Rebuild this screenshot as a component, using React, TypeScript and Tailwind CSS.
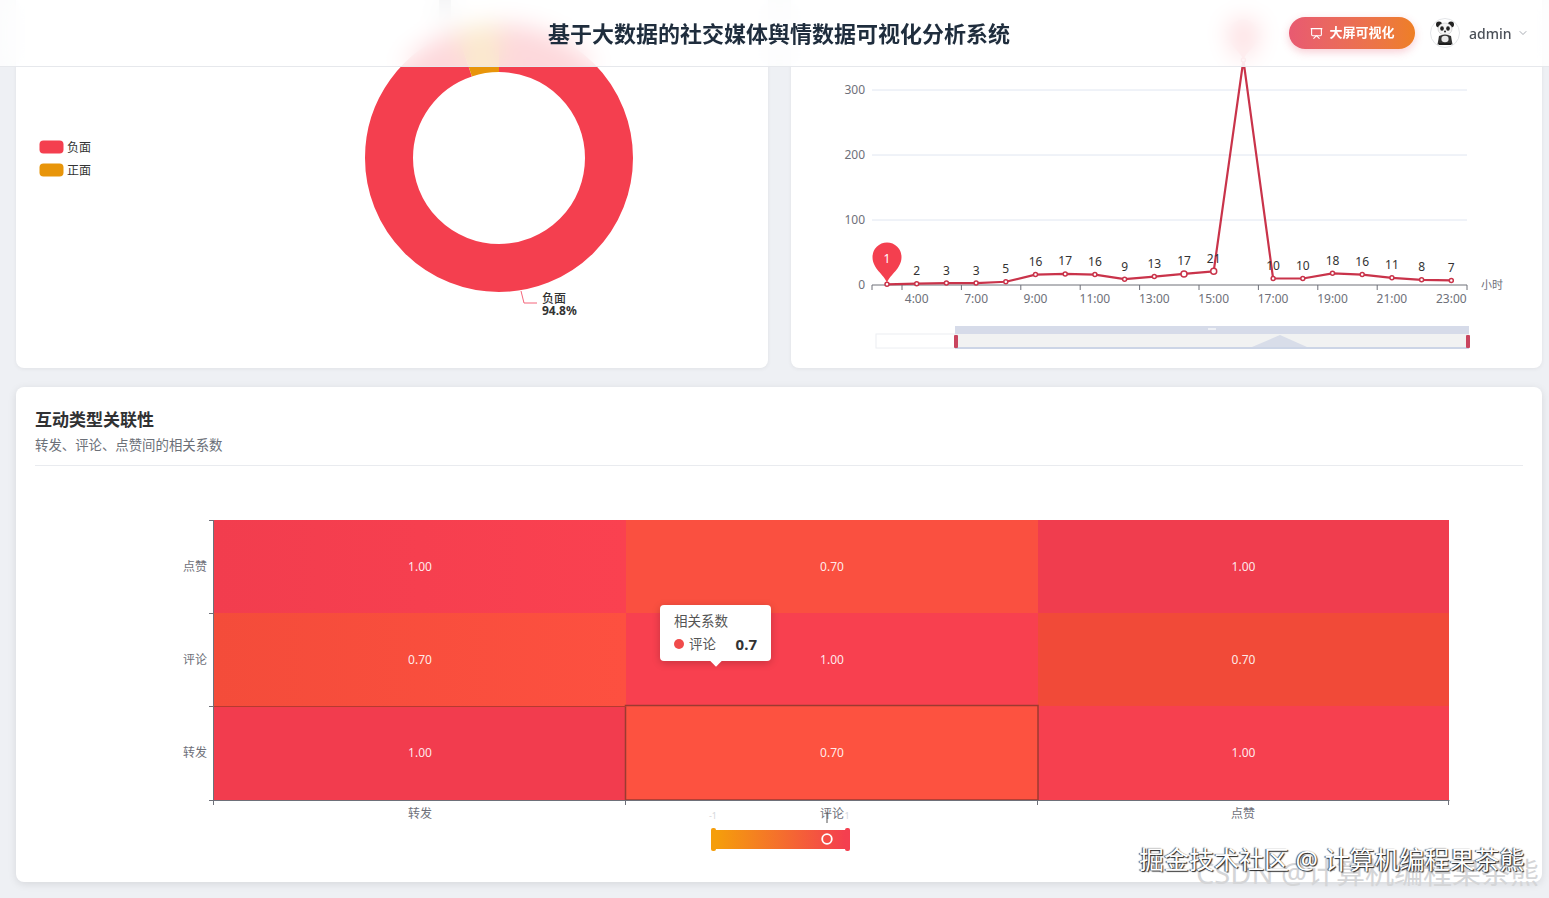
import { ChevronDown, Presentation } from "lucide-react";

const FONT = "font-['Noto_Sans','Noto_Sans_CJK_SC',sans-serif]";

const hours = [1, 2, 3, 3, 5, 16, 17, 16, 9, 13, 17, 21, 346, 10, 10, 18, 16, 11, 8, 7];
const axisLabels = ["4:00", "7:00", "9:00", "11:00", "13:00", "15:00", "17:00", "19:00", "21:00", "23:00"];

const px = (i: number) => 887 + i * 29.7;
const py = (v: number) => 285 - v * 0.65;

const PIN = "M887 283 C884 274 872.5 269 872.5 257 A14.5 14.5 0 0 1 901.5 257 C901.5 269 890 274 887 283 Z";

function Panda() {
  return (
    <svg viewBox="0 0 30 30" className="w-[30px] h-[30px]">
      <circle cx="15" cy="15" r="14.5" fill="#fff" stroke="#e3e5e8" />
      <circle cx="9" cy="6.5" r="3" fill="#222" />
      <circle cx="21" cy="6.5" r="3" fill="#222" />
      <ellipse cx="15" cy="11" rx="7" ry="6" fill="#f4f4f4" stroke="#bbb" strokeWidth="0.5" />
      <ellipse cx="12" cy="10.5" rx="1.8" ry="2.2" fill="#222" />
      <ellipse cx="18" cy="10.5" rx="1.8" ry="2.2" fill="#222" />
      <circle cx="15" cy="13.5" r="1" fill="#222" />
      <path d="M9 18 Q15 15 21 18 L22.5 26.5 H7.5 Z" fill="#333" />
      <ellipse cx="15" cy="21" rx="3.6" ry="3.2" fill="#e8e8e8" />
      <path d="M9 25 H21 V27 H9 Z" fill="#1c1c1c" />
    </svg>
  );
}

function DonutChart() {
  const r = 110;
  const circ = 2 * Math.PI * r;
  const neg = circ * 0.948;
  return (
    <svg width="752" height="388" viewBox="16 -20 752 388" className="block">
      <rect x="439" y="-20" width="12" height="40" fill="#b9bdc4" />
      <g transform="rotate(-90 499 158)" fill="none" strokeWidth="48">
        <circle cx="499" cy="158" r={r} stroke="#f43f4f" strokeDasharray={`${neg} ${circ}`} />
        <circle cx="499" cy="158" r={r} stroke="#e8950a" strokeDasharray={`${circ - neg} ${circ}`} strokeDashoffset={-neg} />
      </g>
      <path d="M521 291 L524 303 L537 303" fill="none" stroke="#f4657a" strokeWidth="1" />
      <text x="542" y="303" fontSize="12" fontWeight="500" fill="#333">负面</text>
      <text x="542" y="315" fontSize="12" fontWeight="700" fill="#333">94.8%</text>

      <rect x="39.5" y="140.5" width="24" height="13" rx="4" fill="#f43f4f" />
      <text x="67" y="152" fontSize="12" fill="#333">负面</text>
      <rect x="39.5" y="163.5" width="24" height="13" rx="4" fill="#e8950a" />
      <text x="67" y="175" fontSize="12" fill="#333">正面</text>
    </svg>
  );
}

function LineChart() {
  const line = hours.map((v, i) => `${px(i)},${py(v)}`).join(" ");
  return (
    <svg width="751" height="388" viewBox="791 -20 751 388" className="block">
      {[25, 90, 155, 220].map((y) => (
        <line key={y} x1="872" x2="1467" y1={y} y2={y} stroke="#e0e6f1" />
      ))}
      {[["300", 90], ["200", 155], ["100", 220], ["0", 285]].map(([t, y]) => (
        <text key={t} x="865" y={Number(y) + 4} textAnchor="end" fontSize="12" fill="#6e7079">{t}</text>
      ))}
      <line x1="872" x2="1467" y1="285" y2="285" stroke="#6e7079" />
      {Array.from({ length: 11 }).map((_, i) => {
        const x = i === 10 ? 1467 : 872 + (i === 0 ? 0 : 30 + (i - 1) * 59.4);
        return <line key={i} x1={x} x2={x} y1="285" y2="290" stroke="#6e7079" />;
      })}
      {axisLabels.map((t, i) => (
        <text key={t} x={px(1 + i * 2)} y="303" textAnchor="middle" fontSize="12" fill="#6e7079">{t}</text>
      ))}
      <text x="1481" y="289" fontSize="11" fill="#6e7079">小时</text>

      <polyline points={line} fill="none" stroke="#c9334a" strokeWidth="2.2" strokeLinejoin="round" />
      {hours.map((v, i) => (
        <circle
          key={i}
          cx={px(i)}
          cy={py(v)}
          r={i === 10 || i === 11 ? 3 : 2}
          fill="#fff"
          stroke="#c9334a"
          strokeWidth="1.5"
        />
      ))}
      {hours.map((v, i) =>
        i === 0 || i === 12 ? null : (
          <text key={i} x={px(i)} y={py(v) - 8.5} textAnchor="middle" fontSize="12" fill="#333">{v}</text>
        ),
      )}

      <path d={PIN} fill="#f43f4f" />
      <text x="887" y="263" textAnchor="middle" fontSize="12" fill="#fff">1</text>
      {/* max pin, only shows blurred through the header */}
      <path d={PIN} fill="#f43f4f" transform="translate(356.4 -223)" />

      <rect x="876" y="334" width="79" height="14" fill="#fff" stroke="#eceef2" />
      <rect x="955" y="326" width="514" height="8" fill="#d6dbe9" />
      <rect x="955" y="334" width="514" height="13" fill="#f1f2f2" />
      <rect x="955" y="347" width="514" height="2" fill="#ccd5e6" />
      <path d="M1252 347 L1280 335 L1307 347 Z" fill="#d8dde9" />
      <rect x="1208" y="328" width="8" height="2" fill="#eef0f5" />
      <rect x="954" y="335" width="4" height="13" rx="1" fill="#c9455f" />
      <rect x="1466" y="335" width="4" height="13" rx="1" fill="#c9455f" />
    </svg>
  );
}

const cells = [
  { x: 214, y: 520, w: 412, h: 93, v: "1.00", g: "url(#hmA)" },
  { x: 626, y: 520, w: 412, h: 93, v: "0.70", g: "#fa5040" },
  { x: 1038, y: 520, w: 411, h: 93, v: "1.00", g: "#f03d4e" },
  { x: 214, y: 613, w: 412, h: 93, v: "0.70", g: "url(#hmB)" },
  { x: 626, y: 613, w: 412, h: 93, v: "1.00", g: "#f8404f" },
  { x: 1038, y: 613, w: 411, h: 93, v: "0.70", g: "#f14a38" },
  { x: 214, y: 706, w: 412, h: 94, v: "1.00", g: "#f23c4e" },
  { x: 626, y: 706, w: 412, h: 94, v: "0.70", g: "#fd5240" },
  { x: 1038, y: 706, w: 411, h: 94, v: "1.00", g: "#f6404f" },
];

function Heatmap() {
  return (
    <svg width="1526" height="416" viewBox="16 466 1526 416" className="block">
      <defs>
        <linearGradient id="hmA" x1="0" x2="1" y1="0" y2="0">
          <stop offset="0" stopColor="#f23d4e" />
          <stop offset="1" stopColor="#fa4150" />
        </linearGradient>
        <linearGradient id="hmB" x1="0" x2="1" y1="0" y2="0">
          <stop offset="0" stopColor="#f44c3a" />
          <stop offset="1" stopColor="#fd5040" />
        </linearGradient>
        <linearGradient id="vm" x1="0" x2="1" y1="0" y2="0">
          <stop offset="0" stopColor="#f59e0b" />
          <stop offset="1" stopColor="#f43f4f" />
        </linearGradient>
      </defs>
      {cells.map((c) => (
        <g key={`${c.x}-${c.y}`}>
          <rect x={c.x} y={c.y} width={c.w} height={c.h} fill={c.g} />
          <text x={c.x + c.w / 2} y={c.y + c.h / 2 + 4} textAnchor="middle" fontSize="12" fill="#fff" fillOpacity="0.9">{c.v}</text>
        </g>
      ))}
      <rect x="625.5" y="705.5" width="412.5" height="94.5" fill="none" stroke="#9c3a30" strokeWidth="1.5" />
      <line x1="214" x2="626" y1="706.5" y2="706.5" stroke="#b8392f" />

      <line x1="213.5" x2="213.5" y1="520" y2="800" stroke="#6e7079" />
      <line x1="213.5" x2="1449.5" y1="800.5" y2="800.5" stroke="#6e7079" />
      {[520, 613, 706, 800].map((y) => (
        <line key={y} x1="209" x2="214" y1={y + 0.5} y2={y + 0.5} stroke="#6e7079" />
      ))}
      {[214, 626, 1038, 1449].map((x) => (
        <line key={x} x1={x - 0.5} x2={x - 0.5} y1="800" y2="805" stroke="#6e7079" />
      ))}
      {[["点赞", 571], ["评论", 664], ["转发", 757]].map(([t, y]) => (
        <text key={t} x="207" y={y} textAnchor="end" fontSize="12" fill="#6e7079">{t}</text>
      ))}
      {[["转发", 420], ["评论", 832], ["点赞", 1243]].map(([t, x]) => (
        <text key={t} x={x} y="818" textAnchor="middle" fontSize="12" fill="#6e7079">{t}</text>
      ))}

      <text x="713" y="819" textAnchor="middle" fontSize="9" fill="#d5d7db">-1</text>
      <text x="847" y="819" textAnchor="middle" fontSize="9" fill="#d5d7db">1</text>
      <rect x="716" y="830" width="129" height="19" fill="url(#vm)" />
      <rect x="711" y="828" width="5" height="23" rx="2" fill="#f59e0b" />
      <rect x="845" y="828" width="5" height="23" rx="2" fill="#f43f4f" />
      <line x1="827" x2="827" y1="812" y2="823" stroke="#555" />
      <circle cx="827" cy="839" r="4.8" fill="none" stroke="#fff" strokeWidth="1.8" />
    </svg>
  );
}

export default function App() {
  return (
    <div className={`${FONT} relative h-[898px] w-[1549px] overflow-hidden bg-[#eef0f4] text-[#303133]`}>
      <header className="relative z-10 flex h-[67px] items-center border-b border-[#e6e8ec] bg-white/80 pl-[548px] pr-[22px] backdrop-blur-md">
        <h1 className="shrink-0 whitespace-nowrap text-[22px] font-bold leading-none text-[#1f2d3d]">基于大数据的社交媒体舆情数据可视化分析系统</h1>
        <button className="ml-[279px] flex h-[32px] w-[126px] shrink-0 items-center justify-center gap-[7px] rounded-full bg-gradient-to-r from-[#e85a71] to-[#ee7f24] text-[13px] font-bold text-white shadow-[0_3px_8px_rgba(232,90,113,0.3)]">
          <Presentation className="h-[13px] w-[13px]" strokeWidth={2} />
          大屏可视化
        </button>
        <div className="ml-[15px] flex shrink-0 items-center">
          <Panda />
          <span className="ml-[9px] text-[14px] font-medium text-[#4a4f57]">admin</span>
          <ChevronDown className="ml-[5px] h-[12px] w-[12px] text-[#8a8f98]" strokeWidth={1.5} />
        </div>
      </header>

      <main className="-mt-[87px] pl-[16px] pr-[7px]">
        <div className="grid grid-cols-[752px_751px] gap-[23px]">
          <section className="rounded-lg bg-white shadow-[0_1px_4px_rgba(0,0,0,0.06)]">
            <DonutChart />
          </section>
          <section className="rounded-lg bg-white shadow-[0_1px_4px_rgba(0,0,0,0.06)]">
            <LineChart />
          </section>
        </div>

        <section className="relative mt-[19px] h-[495px] rounded-lg bg-white shadow-[0_2px_8px_rgba(0,0,0,0.1)]">
          <div className="mx-[19px] h-[79px] border-b border-[#e9ebef] pt-[21px]">
            <h2 className="text-[17px] font-bold leading-[24px] text-[#303133]">互动类型关联性</h2>
            <p className="mt-[4px] text-[13.4px] leading-[18px] text-[#6b7078]">转发、评论、点赞间的相关系数</p>
          </div>
          <div className="relative">
            <Heatmap />
            <div className="absolute left-[644px] top-[139px] h-[56px] w-[111px] rounded bg-white px-[14px] pt-[8px] shadow-[0_2px_8px_rgba(0,0,0,0.2)]">
              <div className="text-[13.5px] leading-[17px] text-[#555]">相关系数</div>
              <div className="mt-[4px] flex items-center text-[15px] leading-[20px] text-[#555]">
                <span className="h-[10px] w-[10px] rounded-full bg-[#f04b4b]" />
                <span className="ml-[5px] text-[13.5px]">评论</span>
                <span className="ml-auto font-bold text-[#333]">0.7</span>
              </div>
              <span className="absolute bottom-[-4px] left-[52px] h-[8px] w-[8px] rotate-45 bg-white" />
            </div>
          </div>
        </section>
      </main>

      <div className="absolute left-[1196px] top-[853px] whitespace-nowrap text-[29px] leading-[40px] text-[#d4d5d7]">CSDN @计算机编程果茶熊</div>
      <div className="absolute left-[1139px] top-[841px] whitespace-nowrap text-[25px] leading-[36px] text-white [text-shadow:1px_1px_1px_#222,-1px_0_1px_#444]">掘金技术社区 @ 计算机编程果茶熊</div>
    </div>
  );
}
